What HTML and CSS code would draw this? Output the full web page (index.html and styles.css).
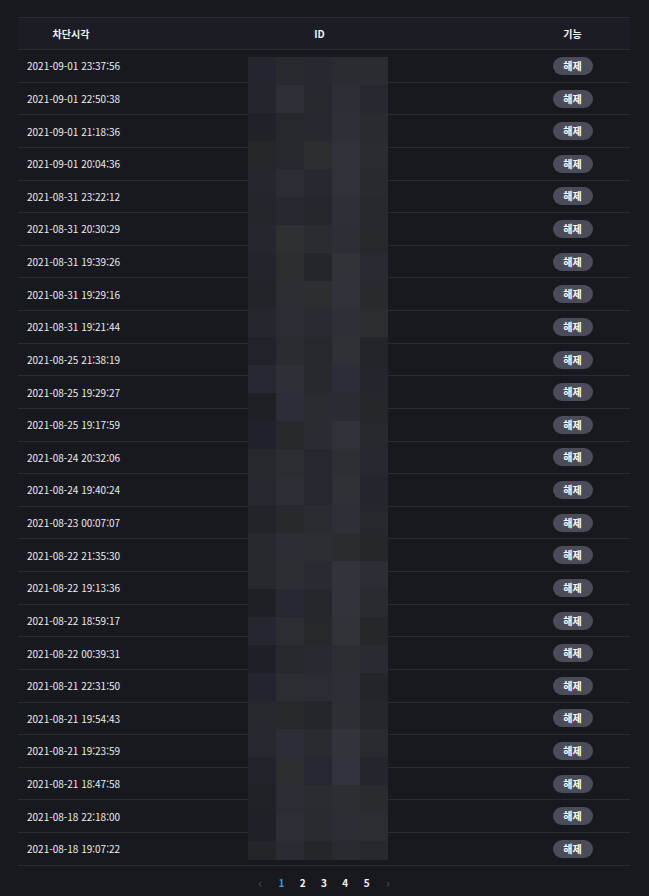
FILE: index.html
```html
<!DOCTYPE html>
<html lang="ko">
<head>
<meta charset="utf-8">
<link rel="stylesheet" href="styles.css">
</head>
<body>
<div class="wrap">
  <table class="tbl">
    <thead>
      <tr><th class="c-time">차단시각</th><th class="c-id">ID</th><th class="c-fn">기능</th></tr>
    </thead>
    <tbody>
      <tr><td>2021-09-01 23:37:56</td><td></td><td class="fn"><span class="btn">해제</span></td></tr>
      <tr><td>2021-09-01 22:50:38</td><td></td><td class="fn"><span class="btn">해제</span></td></tr>
      <tr><td>2021-09-01 21:18:36</td><td></td><td class="fn"><span class="btn">해제</span></td></tr>
      <tr><td>2021-09-01 20:04:36</td><td></td><td class="fn"><span class="btn">해제</span></td></tr>
      <tr><td>2021-08-31 23:22:12</td><td></td><td class="fn"><span class="btn">해제</span></td></tr>
      <tr><td>2021-08-31 20:30:29</td><td></td><td class="fn"><span class="btn">해제</span></td></tr>
      <tr><td>2021-08-31 19:39:26</td><td></td><td class="fn"><span class="btn">해제</span></td></tr>
      <tr><td>2021-08-31 19:29:16</td><td></td><td class="fn"><span class="btn">해제</span></td></tr>
      <tr><td>2021-08-31 19:21:44</td><td></td><td class="fn"><span class="btn">해제</span></td></tr>
      <tr><td>2021-08-25 21:38:19</td><td></td><td class="fn"><span class="btn">해제</span></td></tr>
      <tr><td>2021-08-25 19:29:27</td><td></td><td class="fn"><span class="btn">해제</span></td></tr>
      <tr><td>2021-08-25 19:17:59</td><td></td><td class="fn"><span class="btn">해제</span></td></tr>
      <tr><td>2021-08-24 20:32:06</td><td></td><td class="fn"><span class="btn">해제</span></td></tr>
      <tr><td>2021-08-24 19:40:24</td><td></td><td class="fn"><span class="btn">해제</span></td></tr>
      <tr><td>2021-08-23 00:07:07</td><td></td><td class="fn"><span class="btn">해제</span></td></tr>
      <tr><td>2021-08-22 21:35:30</td><td></td><td class="fn"><span class="btn">해제</span></td></tr>
      <tr><td>2021-08-22 19:13:36</td><td></td><td class="fn"><span class="btn">해제</span></td></tr>
      <tr><td>2021-08-22 18:59:17</td><td></td><td class="fn"><span class="btn">해제</span></td></tr>
      <tr><td>2021-08-22 00:39:31</td><td></td><td class="fn"><span class="btn">해제</span></td></tr>
      <tr><td>2021-08-21 22:31:50</td><td></td><td class="fn"><span class="btn">해제</span></td></tr>
      <tr><td>2021-08-21 19:54:43</td><td></td><td class="fn"><span class="btn">해제</span></td></tr>
      <tr><td>2021-08-21 19:23:59</td><td></td><td class="fn"><span class="btn">해제</span></td></tr>
      <tr><td>2021-08-21 18:47:58</td><td></td><td class="fn"><span class="btn">해제</span></td></tr>
      <tr><td>2021-08-18 22:18:00</td><td></td><td class="fn"><span class="btn">해제</span></td></tr>
      <tr><td>2021-08-18 19:07:22</td><td></td><td class="fn"><span class="btn">해제</span></td></tr>
    </tbody>
  </table>
  <div class="mosaic" id="mosaic"></div>
  <nav class="pager">
    <span class="arrow">&#8249;</span>
    <span class="pg active">1</span>
    <span class="pg">2</span>
    <span class="pg">3</span>
    <span class="pg">4</span>
    <span class="pg">5</span>
    <span class="arrow">&#8250;</span>
  </nav>
</div>
<script src="script.js"></script>
</body>
</html>
```

FILE: styles.css
```css
html, body {
  margin: 0;
  padding: 0;
  background: #18191f;
}
body {
  font-family: "Noto Sans CJK KR", "Noto Sans", sans-serif;
  color: #ececf0;
}
.wrap {
  position: relative;
  padding: 17px 19px 0 18px;
}
.tbl {
  width: 612px;
  border-collapse: collapse;
  table-layout: fixed;
}
.tbl th {
  height: 31px;
  padding: 0;
  background: #1c1d24;
  border-top: 1px solid #2a2b33;
  border-bottom: 1px solid #2a2b33;
  font-size: 10px;
  font-weight: 700;
  color: #f4f4f6;
  text-align: center;
}
.c-time { width: 106px; }
.c-fn { width: 115px; }
.tbl td {
  height: 31.64px;
  padding: 0;
  border-bottom: 1px solid #2a2b33;
  font-size: 10px;
  color: #ececf0;
}
.tbl td:first-child {
  padding-left: 9px;
  white-space: nowrap;
}
.tbl td.fn {
  text-align: center;
}
.btn {
  display: inline-block;
  width: 40px;
  height: 18px;
  line-height: 18px;
  border-radius: 9px;
  background: #4a4d59;
  color: #ffffff;
  font-size: 10px;
  font-weight: 700;
  text-align: center;
  vertical-align: middle;
}
.mosaic {
  position: absolute;
  left: 248px;
  top: 57px;
  width: 140px;
  height: 803px;
  overflow: hidden;
  display: grid;
  grid-template-columns: repeat(5, 28px);
  grid-auto-rows: 28px;
}
.pager {
  display: flex;
  justify-content: center;
  align-items: center;
  height: 34px;
}
.pager span {
  width: 21.3px;
  text-align: center;
  font-size: 10px;
  font-weight: 700;
  color: #f4f4f6;
}
.pager .arrow {
  color: #4a4c56;
  font-size: 13px;
  font-weight: 400;
}
.pager .pg.active {
  color: #3a9ad6;
}
```

FILE: script.js
```js
(function () {
  var m = document.getElementById('mosaic');
  var seed = 11;
  function rnd() {
    seed = (seed * 9301 + 49297) % 233280;
    return seed / 233280;
  }
  var base = [36, 44, 42, 47, 41];
  for (var r = 0; r < 29; r++) {
    for (var c = 0; c < 5; c++) {
      var v = Math.round(base[c] + (rnd() - 0.5) * 9);
      var b = v + 4 + Math.round(rnd() * 5);
      var d = document.createElement('div');
      d.style.background = 'rgb(' + (v - 1) + ',' + v + ',' + b + ')';
      m.appendChild(d);
    }
  }
})();
```
